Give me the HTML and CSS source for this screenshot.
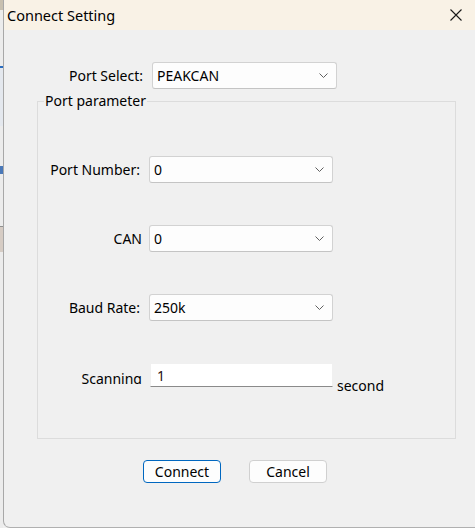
FILE: index.html
```html
<!DOCTYPE html>
<html>
<head>
<meta charset="utf-8">
<link rel="stylesheet" href="styles.css">
</head>
<body>
<div class="screen">
  <div class="bgstrip">
    <span class="bg-bit b1"></span>
    <span class="bg-bit b2"></span>
    <span class="bg-bit b3"></span>
    <span class="bg-bit b4"></span>
    <span class="bg-bit b5"></span>
  </div>
  <div class="dialog">
    <div class="titlebar">
      <span class="title">Connect Setting</span>
      <svg class="close" width="12" height="12" viewBox="0 0 12 12"><path d="M0.5 0.5 L11.5 11.5 M11.5 0.5 L0.5 11.5" stroke="#1a1a1a" stroke-width="1.1" fill="none"/></svg>
    </div>
    <div class="content">
      <div class="top-row">
        <label class="lbl top-lbl">Port Select:</label>
        <div class="combo wide"><span>PEAKCAN</span><svg class="chev" width="9" height="5" viewBox="0 0 9 5"><polyline points="0.5,0.5 4.5,4.5 8.5,0.5" fill="none" stroke="#606060" stroke-width="1"/></svg></div>
      </div>
      <fieldset class="group">
        <legend>Port parameter</legend>
        <div class="grid">
          <label class="lbl">Port Number:</label>
          <div class="combo"><span>0</span><svg class="chev" width="9" height="5" viewBox="0 0 9 5"><polyline points="0.5,0.5 4.5,4.5 8.5,0.5" fill="none" stroke="#606060" stroke-width="1"/></svg></div>
          <label class="lbl shift">CAN</label>
          <div class="combo"><span>0</span><svg class="chev" width="9" height="5" viewBox="0 0 9 5"><polyline points="0.5,0.5 4.5,4.5 8.5,0.5" fill="none" stroke="#606060" stroke-width="1"/></svg></div>
          <label class="lbl">Baud Rate:</label>
          <div class="combo"><span>250k</span><svg class="chev" width="9" height="5" viewBox="0 0 9 5"><polyline points="0.5,0.5 4.5,4.5 8.5,0.5" fill="none" stroke="#606060" stroke-width="1"/></svg></div>
          <label class="lbl clip">Scanning</label>
          <div class="scan-row">
            <div class="edit"><span>1</span></div>
            <span class="unit">second</span>
          </div>
        </div>
      </fieldset>
      <div class="buttons">
        <button class="btn default">Connect</button>
        <button class="btn">Cancel</button>
      </div>
    </div>
  </div>
</div>
</body>
</html>
```
FILE: styles.css
```css
html, body {
  margin: 0;
  padding: 0;
  width: 475px;
  height: 528px;
  overflow: hidden;
  background: #f0f0f0;
}
.screen {
  display: flex;
  width: 475px;
  height: 528px;
  font-family: "Noto Sans", "Open Sans", sans-serif;
  font-size: 14px;
  color: #000;
}
.bgstrip {
  width: 3px;
  background: #ececec;
  display: flex;
  flex-direction: column;
  flex-shrink: 0;
}
.bg-bit { display: block; width: 3px; }
.b1 { height: 10px; background: #c8c0b0; }
.b2 { height: 58px; margin-top: 56px; background: #e4e8ee; border-top: 2px solid #2a6cc0; }
.b3 { height: 8px; margin-top: 40px; background: #4a78b8; }
.b4 { height: 25px; margin-top: 52px; background: #d6ccc4; border-top: 1px solid #909090; }
.b5 { flex: 1; background: #ececec; }
.dialog {
  flex: 1;
  display: flex;
  flex-direction: column;
  border-left: 1px solid #a8a8a8;
  border-bottom: 1px solid #b0b0b0;
  border-bottom-left-radius: 7px;
  background: #f0f0f0;
  height: 527px;
}
.titlebar {
  height: 30px;
  flex-shrink: 0;
  background: #f9f2e6;
  display: flex;
  align-items: center;
  justify-content: space-between;
  padding: 0 13px 0 3px;
}
.title {
  font-size: 14.5px;
  color: #000;
  margin-top: -1px;
}
.close { display: block; margin-top: -1px; }
.content {
  display: flex;
  flex-direction: column;
}
.top-row {
  display: flex;
  align-items: center;
  margin-top: 32px;
}
.lbl {
  text-align: right;
  white-space: nowrap;
}
.shift { margin-right: -2px; }
.top-lbl {
  width: 139px;
  margin-right: 9px;
}
.combo {
  height: 25px;
  background: #fdfdfd;
  border: 1px solid #d2d2d2;
  border-bottom-color: #c4c4c4;
  border-radius: 3px;
  display: flex;
  align-items: center;
  justify-content: space-between;
  padding: 0 0 0 4px;
  box-sizing: content-box;
  width: 178px;
}
.combo.wide { width: 179px; }
.chev { margin-right: 8px; display: block; }
.group {
  margin: 2px 0 0 33px;
  box-sizing: border-box;
  width: 419px;
  border: 1px solid #dcdcdc;
  padding: 0 0 48px 0;
  min-width: 0;
}
.group legend {
  padding: 0 1px;
  margin-left: 6px;
  line-height: 20px;
}
.grid {
  display: grid;
  grid-template-columns: 102px 184px;
  grid-auto-rows: 27px;
  column-gap: 9px;
  row-gap: 42px;
  align-items: center;
  margin-top: 45px;
}
.clip {
  height: 14px;
  line-height: 17px;
  overflow: hidden;
  align-self: start;
  margin-top: 7px;
  margin-right: -2px;
}
.scan-row {
  display: flex;
  align-items: flex-start;
  height: 27px;
}
.edit {
  flex-shrink: 0;
  width: 183px;
  margin-left: 1px;
  background: #fff;
  border: 1px solid #f0f0f0;
  border-bottom: 1px solid #8a8a8a;
  box-sizing: border-box;
  height: 24px;
  display: flex;
  align-items: center;
  padding-left: 6px;
  color: #2a1010;
}
.unit {
  flex-shrink: 0;
  margin-left: 4px;
  margin-top: 15px;
  line-height: 16px;
}
.buttons {
  display: flex;
  gap: 28px;
  margin: 21px 0 0 139px;
}
.btn {
  width: 78px;
  height: 23px;
  font-family: inherit;
  font-size: 14px;
  color: #000;
  background: #fdfdfd;
  border: 1px solid #d0d0d0;
  border-radius: 4px;
  padding: 0;
  line-height: 20px;
}
.btn.default {
  border-color: #0067c0;
}
```
